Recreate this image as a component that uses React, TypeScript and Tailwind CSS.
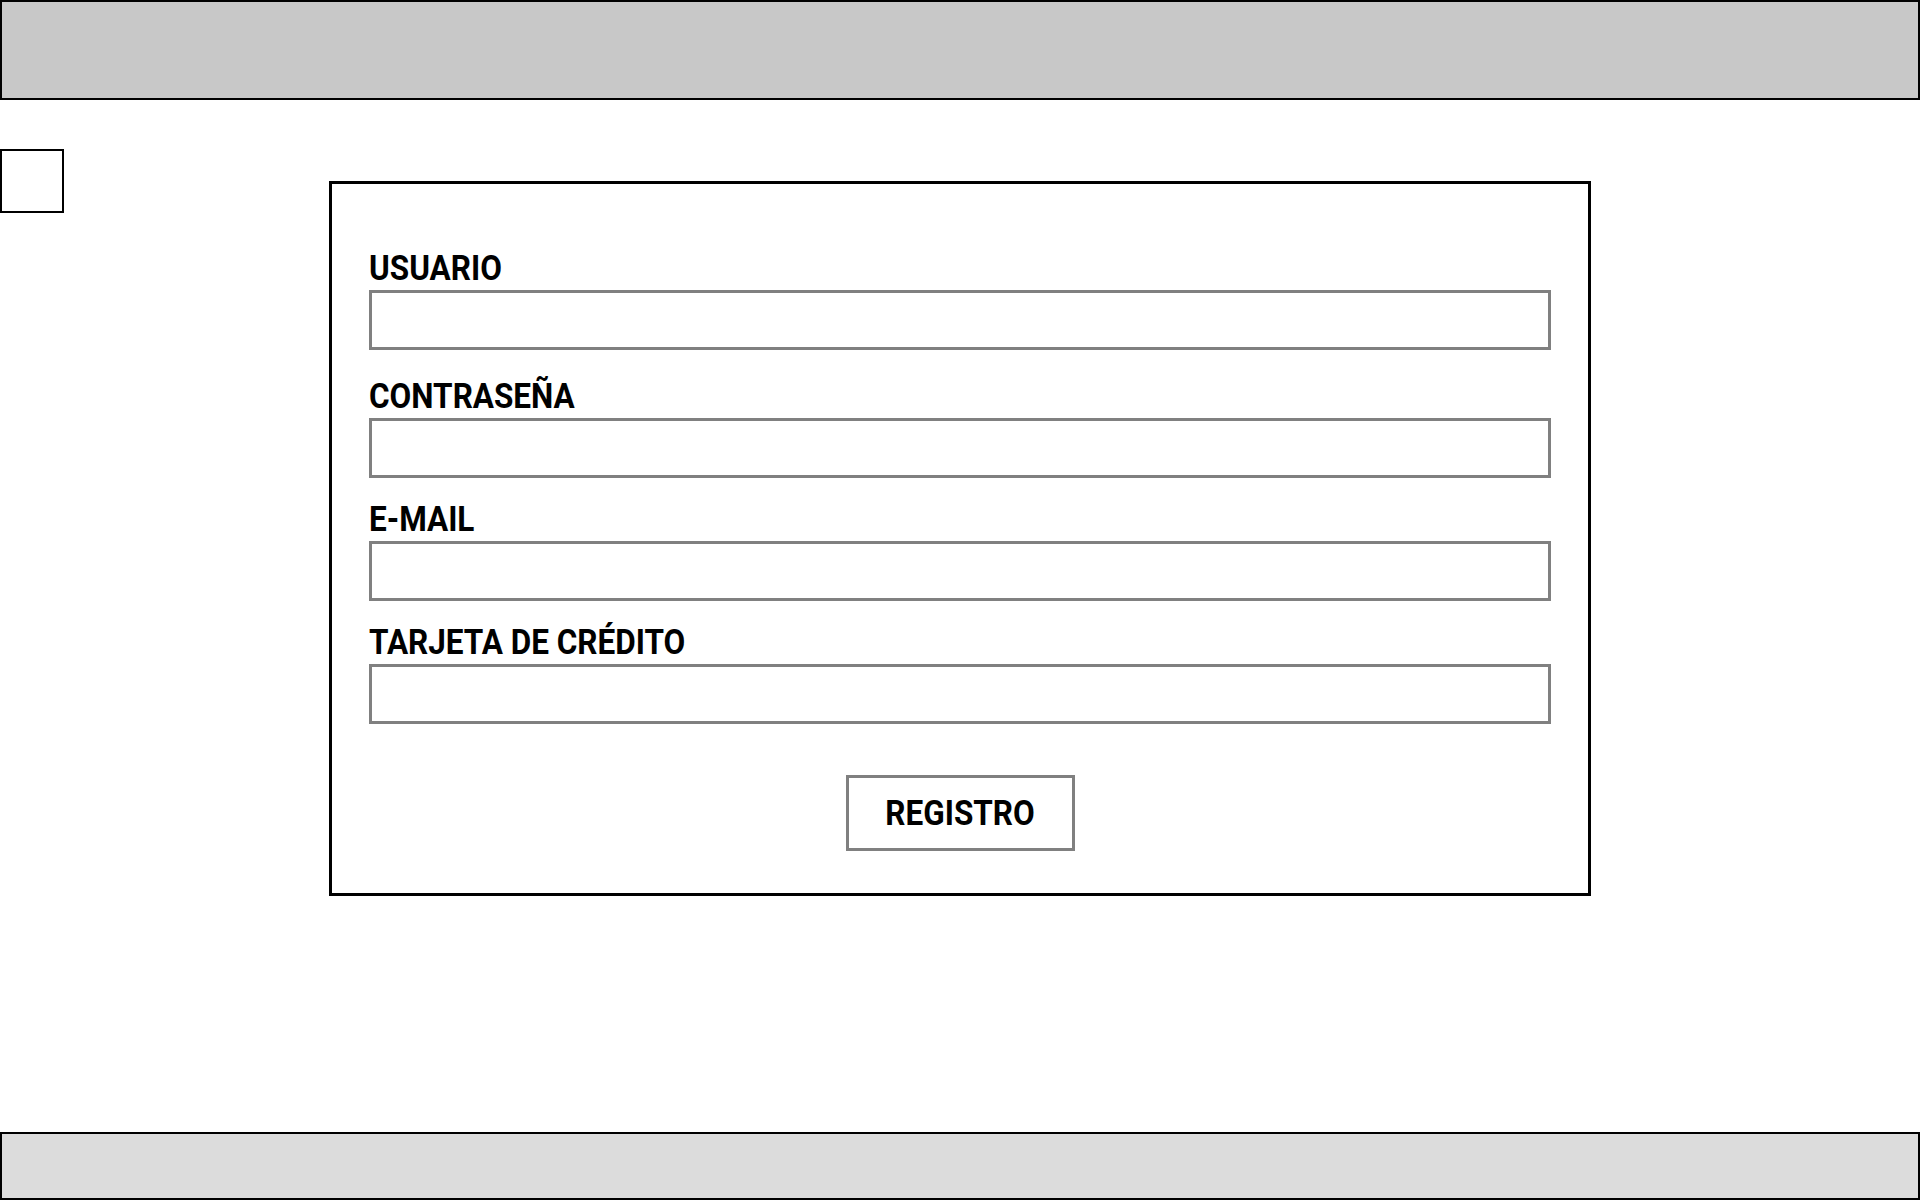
import { useState } from "react";

const fields = [
  { id: "usuario", label: "USUARIO", type: "text", gap: "mt-0" },
  { id: "password", label: "CONTRASEÑA", type: "password", gap: "mt-[28px]" },
  { id: "email", label: "E-MAIL", type: "email", gap: "mt-[23px]" },
  { id: "tarjeta", label: "TARJETA DE CRÉDITO", type: "text", gap: "mt-[23px]" },
];

export default function App() {
  let [values, setValues] = useState<Record<string, string>>({});
  let [menuOpen, setMenuOpen] = useState(false);

  return (
    <div className="min-h-screen flex flex-col bg-white font-['Roboto',sans-serif] text-black">
      <header className="h-[100px] bg-[#c8c8c8] border-2 border-black" />

      <main className="flex-1 grid grid-cols-[329px_1262px_1fr] items-start">
        <button
          aria-label="menu"
          className="mt-[49px] w-16 h-16 border-2 border-black bg-white"
          onClick={() => setMenuOpen(!menuOpen)}
        />

        <form
          className="mt-[81px] border-[3px] border-black px-[37px] pt-[66px] pb-[42px] flex flex-col"
          onSubmit={(e) => e.preventDefault()}
        >
          {fields.map((f) => (
            <div key={f.id} className={`flex flex-col items-start ${f.gap}`}>
              <label
                htmlFor={f.id}
                className="inline-block origin-left scale-x-[0.9] text-[35px] leading-[37px] font-bold whitespace-nowrap"
              >
                {f.label}
              </label>
              <input
                id={f.id}
                type={f.type}
                value={values[f.id] ?? ""}
                onChange={(e) => setValues({ ...values, [f.id]: e.target.value })}
                className="mt-[3px] h-[60px] w-full border-[3px] border-[#808080] px-3 text-2xl outline-none"
              />
            </div>
          ))}

          <button
            type="submit"
            className="mt-[51px] self-center w-[229px] h-[76px] border-[3px] border-[#808080] flex items-center justify-center"
          >
            <span className="inline-block scale-x-[0.9] text-[35px] font-bold leading-none">
              REGISTRO
            </span>
          </button>
        </form>
      </main>

      <footer className="h-[68px] bg-[#dcdcdc] border-2 border-black" />
    </div>
  );
}
